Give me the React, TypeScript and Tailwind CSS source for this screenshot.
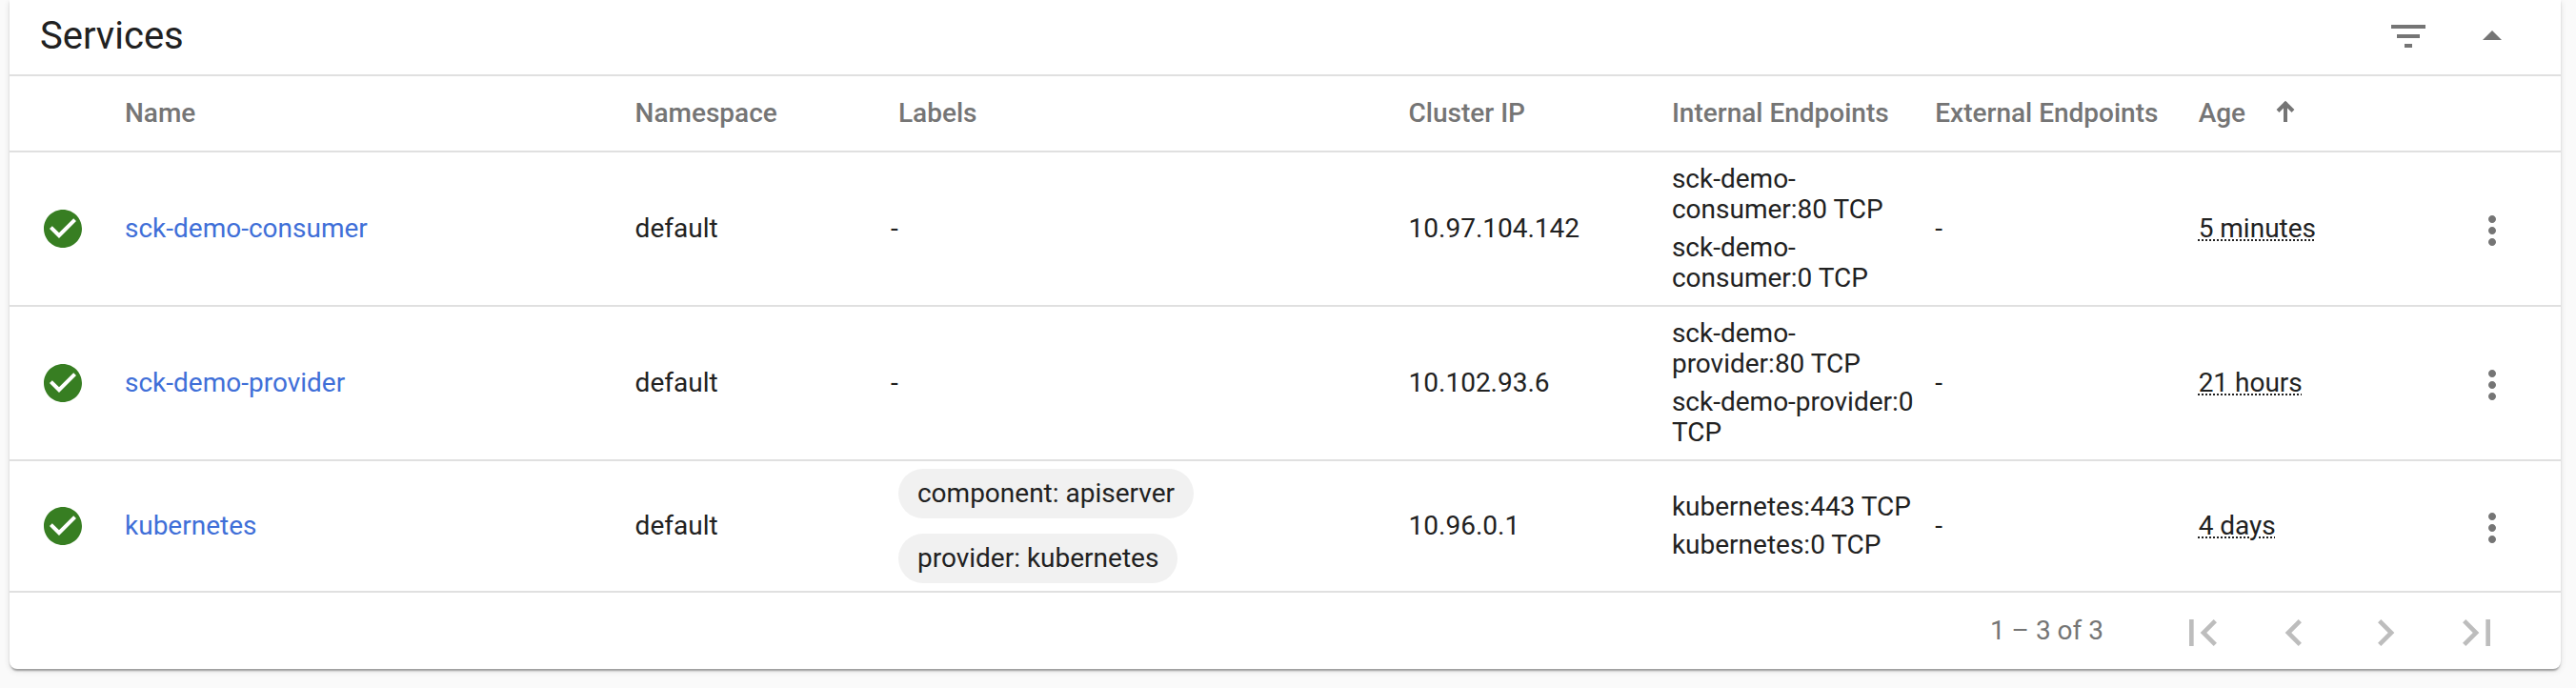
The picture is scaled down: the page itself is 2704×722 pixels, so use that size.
import { useState } from 'react'
import {
  MdArrowDropDown,
  MdArrowDropUp,
  MdCheckCircle,
  MdChevronLeft,
  MdChevronRight,
  MdFilterList,
  MdFirstPage,
  MdLastPage,
  MdMoreVert
} from 'react-icons/md'

interface Service {
  name: string
  namespace: string
  labels: string[]
  clusterIp: string
  internalEndpoints: string[]
  age: string
}

const services: Service[] = [
  {
    name: 'sck-demo-consumer',
    namespace: 'default',
    labels: [],
    clusterIp: '10.97.104.142',
    internalEndpoints: ['sck-demo-consumer:80 TCP', 'sck-demo-consumer:0 TCP'],
    age: '5 minutes'
  },
  {
    name: 'sck-demo-provider',
    namespace: 'default',
    labels: [],
    clusterIp: '10.102.93.6',
    internalEndpoints: ['sck-demo-provider:80 TCP', 'sck-demo-provider:0 TCP'],
    age: '21 hours'
  },
  {
    name: 'kubernetes',
    namespace: 'default',
    labels: ['component: apiserver', 'provider: kubernetes'],
    clusterIp: '10.96.0.1',
    internalEndpoints: ['kubernetes:443 TCP', 'kubernetes:0 TCP'],
    age: '4 days'
  }
]

const pagerButtons = [
  { label: 'First page', Icon: MdFirstPage },
  { label: 'Previous page', Icon: MdChevronLeft },
  { label: 'Next page', Icon: MdChevronRight },
  { label: 'Last page', Icon: MdLastPage }
]

const headCell = 'h-20 border-b-2 border-[#e0e0e0] p-0 text-left font-medium'
const bodyCell = 'border-b-2 border-[#e0e0e0] p-0'

function SortArrow() {
  return (
    <svg
      className="mb-1 ml-8 h-6 w-5"
      viewBox="0 0 20 24"
      fill="none"
      stroke="currentColor"
      strokeWidth="4"
      aria-hidden="true"
    >
      <path d="M10 2.5V23" />
      <path d="M2 11.5L10 3.5L18 11.5" />
    </svg>
  )
}

function ServiceRow({ service }: { service: Service }) {
  return (
    <tr>
      <td className={bodyCell}>
        <MdCheckCircle className="ml-8 size-12 text-[#377e22]" />
      </td>
      <td className={bodyCell}>
        <a href={`#/service/${service.name}`} className="text-[#3f6fd8]">
          {service.name}
        </a>
      </td>
      <td className={bodyCell}>{service.namespace}</td>
      <td className={bodyCell}>
        <div className="-mx-2 flex flex-col items-start">
          {service.labels.length === 0 && <span>-</span>}
          {service.labels.map((label) => (
            <span key={label} className="m-2 rounded-full bg-[#f1f1f1] px-5 py-2.5">
              {label}
            </span>
          ))}
        </div>
      </td>
      <td className={bodyCell}>{service.clusterIp}</td>
      <td className="border-b-2 border-[#e0e0e0] py-2 pr-4 pl-0">
        {service.internalEndpoints.map((endpoint) => (
          <div key={endpoint} className="py-1">
            {endpoint}
          </div>
        ))}
      </td>
      <td className={bodyCell}>-</td>
      <td className={bodyCell}>
        <span className="underline decoration-dotted decoration-2 underline-offset-2">
          {service.age}
        </span>
      </td>
      <td className={bodyCell}>
        <button
          aria-label={`Actions for ${service.name}`}
          className="-ml-2 flex size-20 items-center justify-center pt-1 text-[#757575]"
        >
          <MdMoreVert className="size-12" />
        </button>
      </td>
    </tr>
  )
}

export default function App() {
  const [open, setOpen] = useState(true)

  return (
    <div className="min-h-screen bg-[#fafafa] pr-4 pl-2.5 font-['Roboto',sans-serif] text-[28px] leading-8 text-[#212121]">
      <section className="rounded-b-lg bg-white shadow-[0_4px_2px_-2px_rgba(0,0,0,0.2),0_2px_2px_0_rgba(0,0,0,0.14),0_2px_6px_0_rgba(0,0,0,0.12)]">
        {/* Card header */}
        <header className="flex h-20 items-center justify-between border-b-2 border-[#e0e0e0] px-8 pb-0.5">
          <h2 className="text-[40px] leading-12">Services</h2>
          <div className="flex gap-2 text-[#757575]">
            <button aria-label="Filter" className="flex w-20 justify-center">
              <MdFilterList className="size-12" />
            </button>
            <button
              aria-label={open ? 'Collapse' : 'Expand'}
              onClick={() => setOpen(!open)}
              className="flex w-20 justify-center"
            >
              {open ? <MdArrowDropUp className="size-12" /> : <MdArrowDropDown className="size-12" />}
            </button>
          </div>
        </header>

        {open && (
          <>
            <table className="w-full table-fixed border-separate border-spacing-0">
              <colgroup>
                <col className="w-[121px]" />
                <col className="w-[20%]" />
                <col />
                <col className="w-[20%]" />
                <col />
                <col />
                <col />
                <col />
                <col className="w-[104px]" />
              </colgroup>
              <thead className="text-[#757575]">
                <tr>
                  <th className={headCell}></th>
                  <th className={headCell}>Name</th>
                  <th className={headCell}>Namespace</th>
                  <th className={headCell}>Labels</th>
                  <th className={headCell}>Cluster IP</th>
                  <th className={headCell}>Internal Endpoints</th>
                  <th className={headCell}>External Endpoints</th>
                  <th className={headCell}>
                    <button className="flex items-center">
                      Age
                      <SortArrow />
                    </button>
                  </th>
                  <th className={headCell}></th>
                </tr>
              </thead>
              <tbody>
                {services.map((service) => (
                  <ServiceRow key={service.name} service={service} />
                ))}
              </tbody>
            </table>

            {/* Paginator */}
            <footer className="flex h-20 items-center justify-end pr-10 text-[#757575]">
              <span className="mr-14">1 – 3 of 3</span>
              {pagerButtons.map(({ label, Icon }) => (
                <button
                  key={label}
                  aria-label={label}
                  disabled
                  className="flex w-24 justify-center pt-1 text-[#bdbdbd]"
                >
                  <Icon className="size-14" />
                </button>
              ))}
            </footer>
          </>
        )}
      </section>
    </div>
  )
}
